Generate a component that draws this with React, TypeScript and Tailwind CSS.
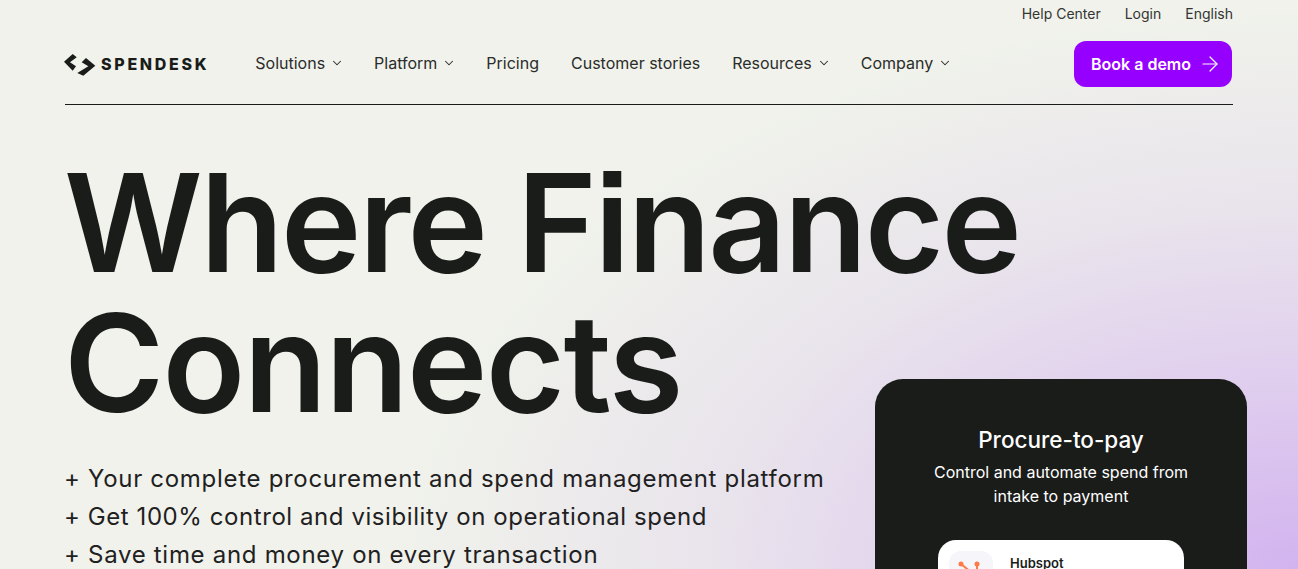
import { ChevronDown, ArrowRight } from "lucide-react";

const navItems = [
  { label: "Solutions", caret: true },
  { label: "Platform", caret: true },
  { label: "Pricing", caret: false },
  { label: "Customer stories", caret: false },
  { label: "Resources", caret: true },
  { label: "Company", caret: true },
];

const Logo = () => (
  <div className="flex items-center gap-[5px]">
    <svg width="32" height="23" viewBox="0 0 32 23" fill="#1a1c1a">
      <polygon points="0,8.7 8.7,1 12.7,4.3 6,9.3 12,13.3 8.7,17.7" />
      <polygon points="22,5 31.3,12.7 19.3,22.7 13.3,20 24.3,13.3 17.7,9.3" />
    </svg>
    <span className="text-[16px] font-extrabold tracking-[2.7px] text-[#1a1c1a]">SPENDESK</span>
  </div>
);

const App = () => {
  return (
    <div className="relative h-[569px] w-full overflow-hidden bg-[#f0f2eb] font-['Inter',sans-serif] text-[#1a1c1a] [font-feature-settings:'ss07','ss08']">
      <div className="absolute inset-0 bg-[radial-gradient(ellipse_900px_560px_at_1298px_569px,#d2b3ef_0%,#e0cfee_35%,#e9e4ec_65%,#f0f2eb_100%)]" />

      <div className="relative pr-[65px] pl-[64px]">
        <div className="flex h-[27px] items-center justify-end gap-[24px] text-[14px] text-[#333533]">
          <span>Help Center</span>
          <span>Login</span>
          <span>English</span>
        </div>

        <header className="ml-[1px] flex h-[78px] items-start border-b border-[#1a1c1a] pt-[14px]">
          <div className="-ml-[1px] flex h-[46px] items-center">
            <Logo />
          </div>
          <nav className="ml-[46px] flex h-[44px] items-center gap-[32px] text-[16px] text-[#2a2c2a]">
            {navItems.map((item) => (
              <div key={item.label} className="flex items-center gap-[5px]">
                <span>{item.label}</span>
                {item.caret && <ChevronDown className="-mr-[2px]" size={14} strokeWidth={1.8} />}
              </div>
            ))}
          </nav>
          <button className="mr-[1px] ml-auto flex h-[46px] w-[158px] items-center gap-[7px] rounded-[12px] bg-[#9600ff] pl-[17px] text-[16px] font-semibold text-white">
            Book a demo
            <ArrowRight size={24} strokeWidth={1.2} />
          </button>
        </header>

        <h1 className="mt-[48px] text-[136px] leading-[140px] font-semibold text-[#1a1c1a]">
          <span className="tracking-[-2.5px]">Where Finance</span>
          <br />
          <span className="tracking-[-1.6px]">Connects</span>
        </h1>

        <ul className="mt-[27px] text-[24px] leading-[38px] text-[#1f211f]">
          <li className="tracking-[0.7px]">+ Your complete procurement and spend management platform</li>
          <li className="tracking-[0.57px]">+ Get 100% control and visibility on operational spend</li>
          <li className="tracking-[0.7px]">+ Save time and money on every transaction</li>
        </ul>
      </div>

      <div className="absolute top-[379px] left-[875px] h-[240px] w-[372px] rounded-[28px] bg-[#1a1c1a] pt-[46px] text-center text-white">
        <h2 className="text-[22.5px] leading-[30px] font-medium">Procure-to-pay</h2>
        <p className="mx-auto mt-[5px] w-[280px] text-[16px] leading-[24px]">
          Control and automate spend from intake to payment
        </p>
        <div className="mx-auto mt-[32px] flex h-[80px] w-[246px] rounded-[18px] bg-white pt-[11px] pl-[11px] text-left">
          <div className="flex h-[50px] w-[44px] justify-center rounded-[12px] bg-[#f6f6fa] pt-[8px]">
            <svg className="mr-[4px]" width="22" height="22" viewBox="0 0 22 22" fill="none" stroke="#ff7a45" strokeWidth="2">
              <circle cx="3" cy="5" r="2.5" fill="#ff7a45" stroke="none" />
              <circle cx="19" cy="5" r="2.5" fill="#ff7a45" stroke="none" />
              <path d="M3 5 L14 14 M19 5 V14" />
            </svg>
          </div>
          <span className="mt-[3px] ml-[17px] text-[13px] leading-[18px] font-semibold text-[#1a1c1a]">Hubspot</span>
        </div>
      </div>
    </div>
  );
};

export default App;
